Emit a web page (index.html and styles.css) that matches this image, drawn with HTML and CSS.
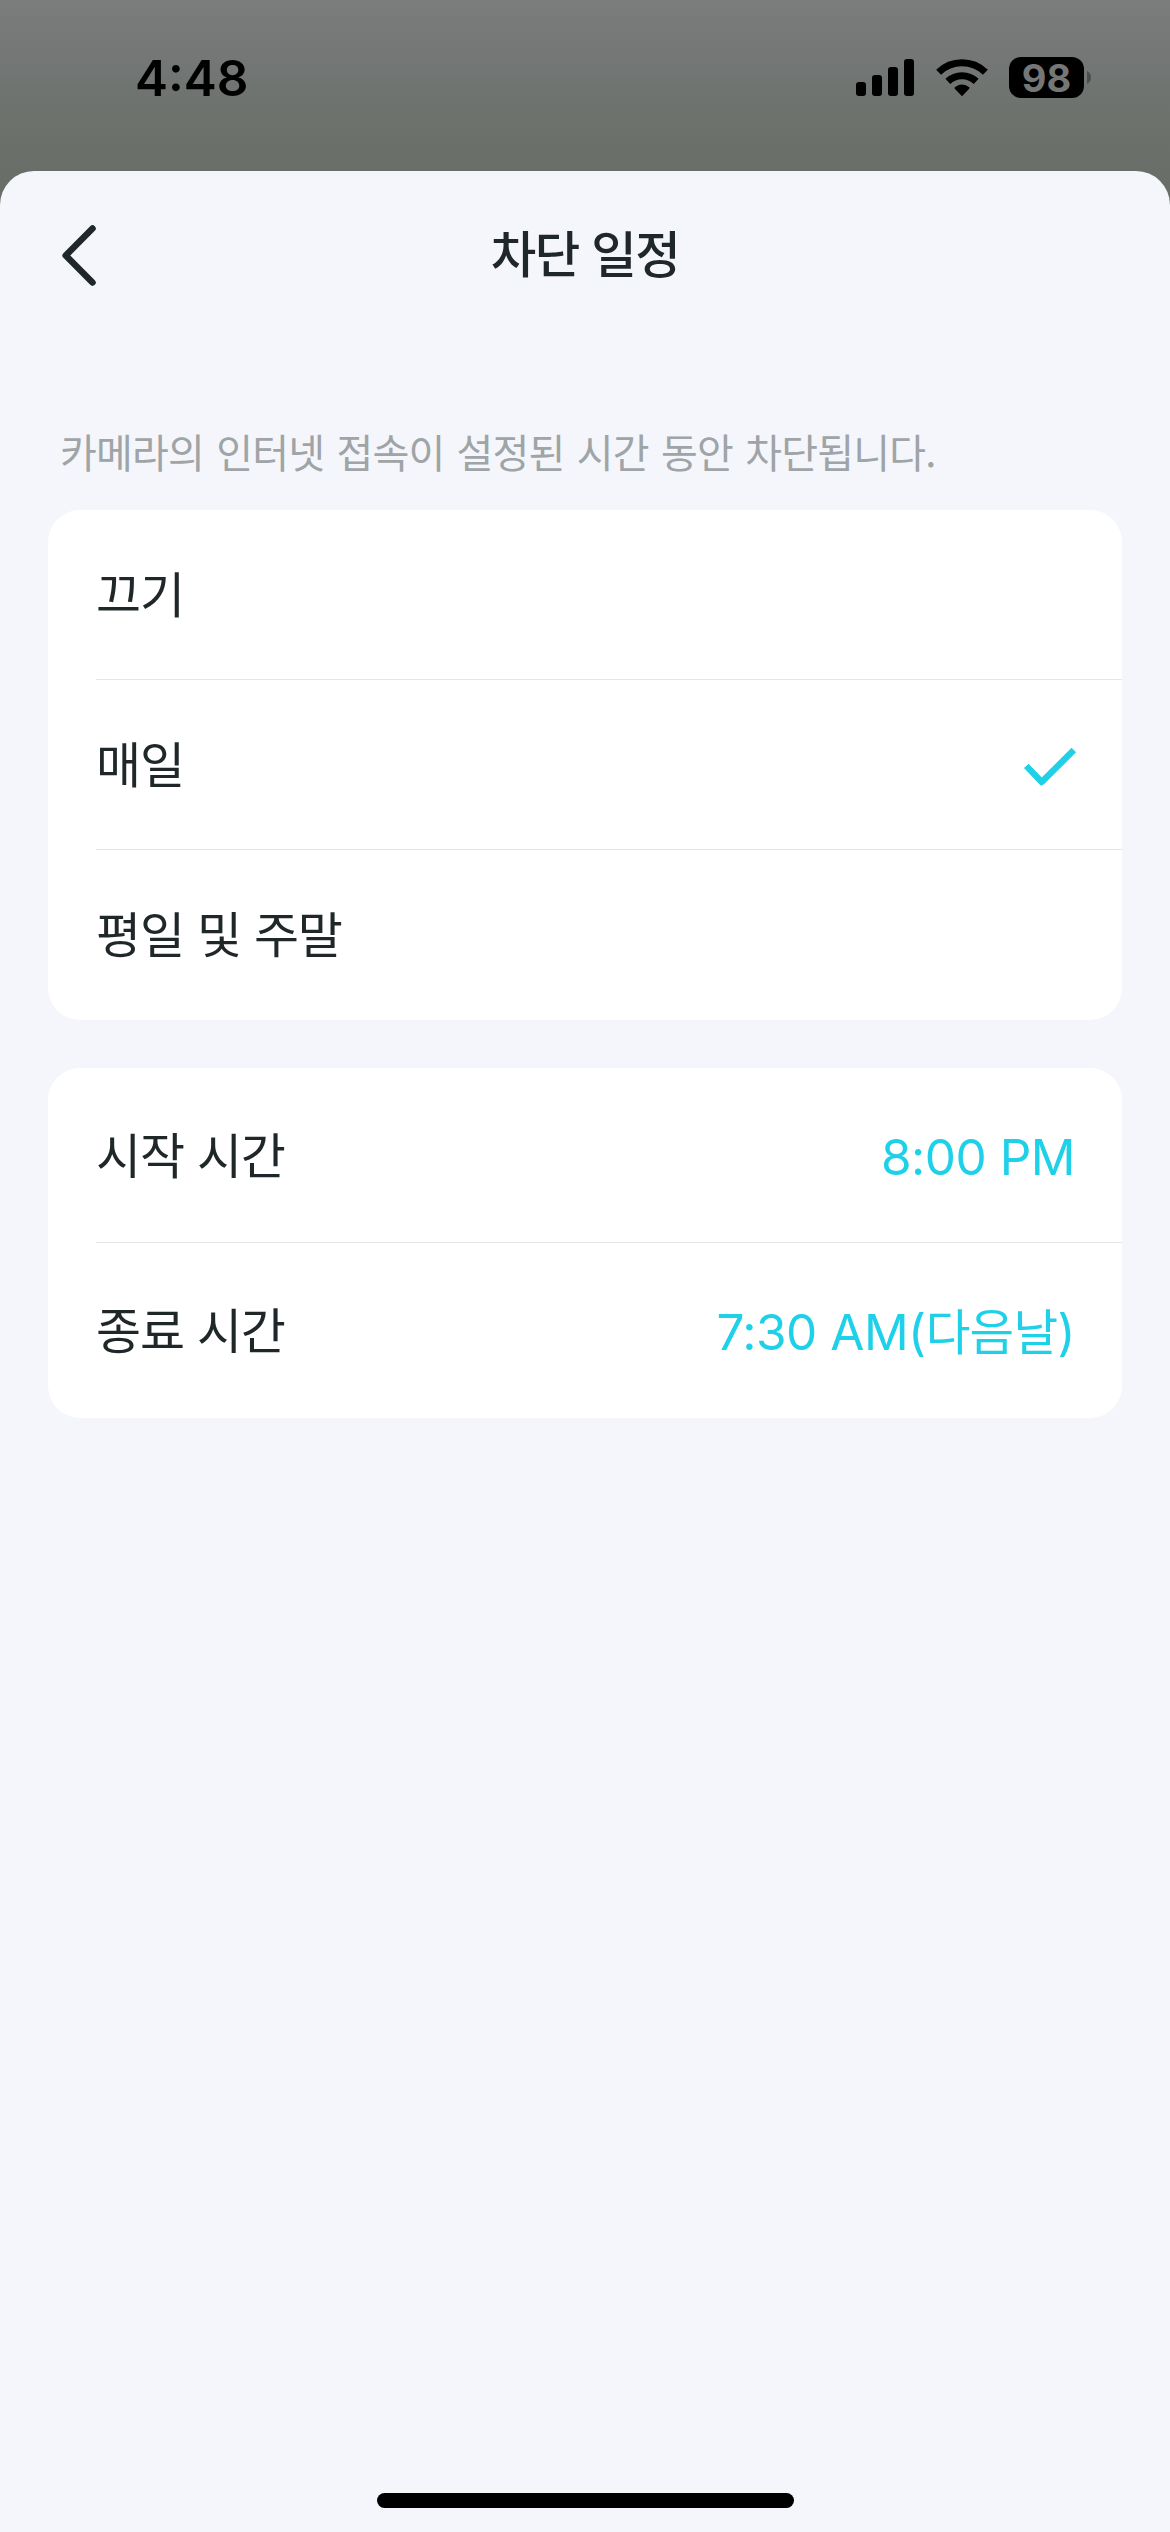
FILE: index.html
```html
<!DOCTYPE html>
<html lang="ko">
<head>
<meta charset="utf-8">
<title>차단 일정</title>
<link rel="stylesheet" href="styles.css">
</head>
<body>
<div class="screen">
  <div class="status-bar">
    <span class="clock">4:48</span>
    <div class="status-icons">
      <svg class="signal" width="58" height="37" viewBox="0 0 58 37">
        <rect x="0" y="23" width="10" height="14" rx="3"/>
        <rect x="16" y="16" width="10" height="21" rx="3"/>
        <rect x="32" y="8" width="10" height="29" rx="3"/>
        <rect x="48" y="0" width="10" height="37" rx="3"/>
      </svg>
      <svg class="wifi" width="52" height="38" viewBox="0 0 52 38">
        <path d="M26 37.3L33.2 29.8Q34.1 28.8 32.8 28Q26 23.2 19.2 28Q17.9 28.8 18.8 29.8Z"/>
        <path class="wave" d="M11.8 22.4A20.6 20.6 0 0 1 40.2 22.4"/>
        <path class="wave" d="M2.6 13.2A33.6 33.6 0 0 1 49.4 13.2"/>
      </svg>
      <div class="battery">
        <span class="battery-level">98</span>
        <svg class="battery-tip" width="4" height="13" viewBox="0 0 4 13"><path d="M0 0Q4 2.2 4 6.5T0 13Z"/></svg>
      </div>
    </div>
  </div>

  <main class="sheet">
    <header class="nav">
      <svg class="back" width="34" height="61" viewBox="0 0 34 61"><path d="M30.5 3.5L3.7 30.5L30.5 57.5"/></svg>
      <h1 class="title">차단 일정</h1>
    </header>

    <p class="note">카메라의 인터넷 접속이 설정된 시간 동안 차단됩니다.</p>

    <ul class="card modes">
      <li class="row"><span class="label">끄기</span></li>
      <li class="row">
        <span class="label">매일</span>
        <svg class="check" width="54" height="40" viewBox="0 0 54 40"><path d="M3.3 18.9L18.7 35L50.8 3.1"/></svg>
      </li>
      <li class="row"><span class="label">평일 및 주말</span></li>
    </ul>

    <ul class="card times">
      <li class="row"><span class="label">시작 시간</span><span class="value">8:00 PM</span></li>
      <li class="row"><span class="label">종료 시간</span><span class="value">7:30 AM(<span class="value-ko">다음날</span>)</span></li>
    </ul>

    <div class="home-indicator"></div>
  </main>
</div>
</body>
</html>
```
FILE: styles.css
```css
* {
  box-sizing: border-box;
  margin: 0;
  padding: 0;
}

body {
  width: 1170px;
  height: 2532px;
  overflow: hidden;
  color: #1f2729;
  font-family: "Noto Sans CJK KR", sans-serif;
}

.screen {
  display: flex;
  flex-direction: column;
  height: 2532px;
  background: linear-gradient(#7b7c7c 0, #747776 56px, #6d726d 115px, #696e69 171px, #696e69 100%);
}

.status-bar {
  display: flex;
  justify-content: space-between;
  height: 171px;
  padding: 57px 79px 0 135px;
  color: #000;
  font-family: Inter, sans-serif;
}

.clock {
  height: 42px;
  font-size: 49.5px;
  font-weight: 600;
  line-height: 42px;
}

.status-icons {
  display: flex;
  align-items: center;
  height: 41px;
}

.wifi {
  margin: 1px 21px 0 22px;
}

.wave {
  fill: none;
  stroke: #000;
  stroke-width: 7;
}

.battery {
  display: flex;
  align-items: center;
  gap: 3px;
}

.battery-level {
  width: 75px;
  height: 41px;
  border-radius: 12px;
  background: #000;
  color: #747776;
  font-size: 38px;
  font-weight: 700;
  line-height: 42px;
  text-align: center;
}

.battery-tip {
  fill: #4c4e4d;
}

.sheet {
  display: flex;
  flex: 1;
  flex-direction: column;
  padding: 0 48px 24px;
  border-radius: 34px 34px 0 0;
  background: #f5f6fb;
}

.nav {
  display: grid;
  grid-template-columns: 34px 1fr 34px;
  align-items: center;
  height: 168px;
  padding: 0 14px;
}

.back {
  fill: none;
  stroke: #1f2729;
  stroke-width: 6.5;
  stroke-linecap: round;
  stroke-linejoin: round;
}

.title {
  padding-bottom: 7px;
  font-size: 49.5px;
  font-weight: 500;
  letter-spacing: -1.5px;
  line-height: 72px;
  text-align: center;
}

.note {
  height: 60px;
  margin: 82px 0 29px 12px;
  color: #9fa4a6;
  font-size: 40px;
  letter-spacing: -0.8px;
  line-height: 60px;
  white-space: nowrap;
  word-spacing: 1.8px;
}

.card {
  border-radius: 32px;
  background: #fff;
  list-style: none;
}

.row {
  display: flex;
  align-items: center;
  justify-content: space-between;
  height: 170px;
  margin-left: 48px;
  padding-right: 45px;
  border-bottom: 1px solid #e4e5e5;
}

.row:last-child {
  border-bottom-color: transparent;
}

.times {
  margin-top: 48px;
}

.times .row {
  height: 175px;
}

.label {
  padding-bottom: 6px;
  font-size: 49px;
  letter-spacing: -1.2px;
  word-spacing: 0.6px;
}

.times .label {
  padding-bottom: 5px;
}

.value {
  padding: 4px 2px 0 0;
  color: #1fd1e8;
  font-family: Inter, "Noto Sans CJK KR", sans-serif;
  font-size: 49.5px;
  letter-spacing: -0.5px;
  line-height: 60px;
}

.value-ko {
  font-family: "Noto Sans CJK KR", sans-serif;
  font-size: 48.5px;
  letter-spacing: -0.7px;
  line-height: 0;
}

.check {
  margin-top: 4px;
  fill: none;
  stroke: #1fd1e8;
  stroke-width: 6.4;
  stroke-linejoin: round;
}

.home-indicator {
  width: 417px;
  height: 15px;
  margin: auto auto 0;
  border-radius: 8px;
  background: #000;
}
```
